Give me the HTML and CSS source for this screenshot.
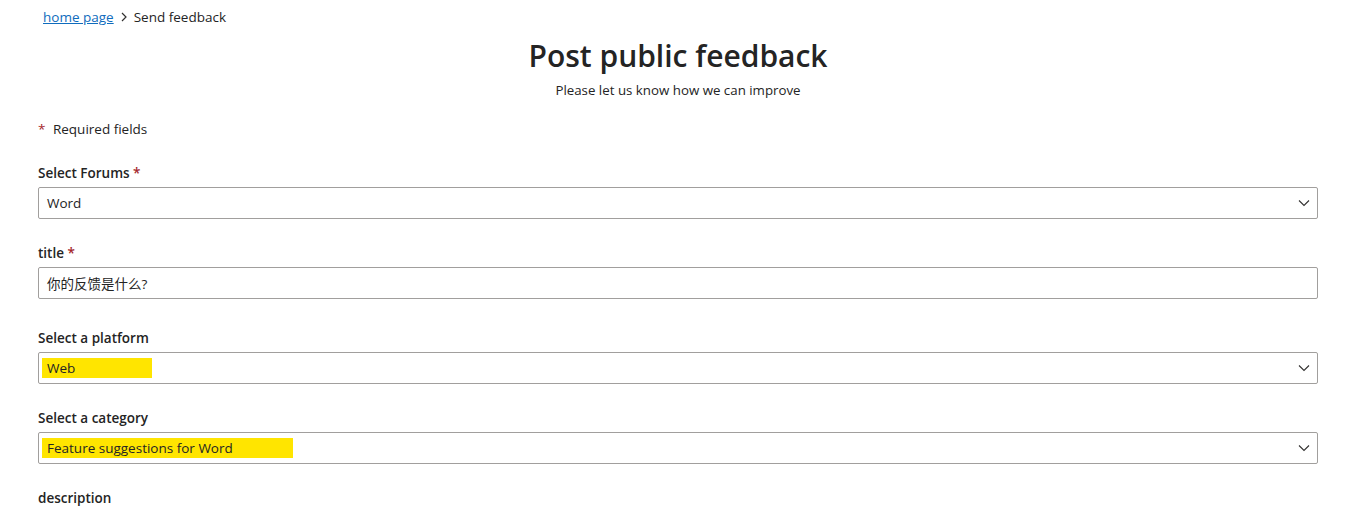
FILE: index.html
```html
<!DOCTYPE html>
<html lang="en">
<head>
<meta charset="UTF-8" />
<title>Post public feedback</title>
<link rel="stylesheet" href="styles.css">
</head>
<body>

<div class="page">
  <nav class="breadcrumb">
    <a href="#">home page</a>
    <svg class="crumb-sep" width="8" height="10" viewBox="0 0 8 10"><path d="M2 1l4 4-4 4" fill="none" stroke="#323130" stroke-width="1.2"/></svg>
    <span>Send feedback</span>
  </nav>

  <header class="intro">
    <h1>Post public feedback</h1>
    <p>Please let us know how we can improve</p>
  </header>

  <p class="required-note"><span class="star">*</span> Required fields</p>

  <div class="field">
    <label>Select Forums <span class="star">*</span></label>
    <div class="select">
      <span class="value">Word</span>
      <svg class="chevron" width="12" height="8" viewBox="0 0 12 8"><path d="M1 1.5l5 5 5-5" fill="none" stroke="#323130" stroke-width="1.1"/></svg>
    </div>
  </div>

  <div class="field">
    <label>title <span class="star">*</span></label>
    <div class="input">你的反馈是什么?</div>
  </div>

  <div class="field gap-top">
    <label>Select a platform</label>
    <div class="select">
      <span class="value mark mark-platform">Web</span>
      <svg class="chevron" width="12" height="8" viewBox="0 0 12 8"><path d="M1 1.5l5 5 5-5" fill="none" stroke="#323130" stroke-width="1.1"/></svg>
    </div>
  </div>

  <div class="field">
    <label>Select a category</label>
    <div class="select">
      <span class="value mark mark-category">Feature suggestions for Word</span>
      <svg class="chevron" width="12" height="8" viewBox="0 0 12 8"><path d="M1 1.5l5 5 5-5" fill="none" stroke="#323130" stroke-width="1.1"/></svg>
    </div>
  </div>

  <div class="field">
    <label>description</label>
  </div>
</div>

</body>
</html>
```

FILE: styles.css
```css
* {
  box-sizing: border-box;
}
body {
  margin: 0;
  font-family: "Open Sans", "Noto Sans CJK SC", sans-serif;
  font-size: 14px;
  color: #242424;
  background: #fff;
}
.page {
  width: 1280px;
  margin-left: 38px;
}
.breadcrumb {
  display: flex;
  align-items: center;
  gap: 6px;
  height: 34px;
  padding-left: 5px;
  font-size: 13.5px;
}
.breadcrumb a {
  color: #0f6cbd;
  text-decoration: underline;
}
.intro {
  text-align: center;
}
.intro h1 {
  margin: 0;
  font-size: 30px;
  font-weight: 600;
  line-height: 44px;
  color: #242424;
}
.intro p {
  margin: 2px 0 0;
  font-size: 13.3px;
  line-height: 20px;
}
.required-note {
  margin: 19px 0 0;
  font-size: 13.5px;
  line-height: 20px;
}
.star {
  color: #a4262c;
}
.required-note .star {
  margin-right: 4px;
}
.field {
  margin-top: 24px;
}
.field.gap-top {
  margin-top: 29px;
}
.field label {
  display: block;
  font-weight: 600;
  font-size: 13.5px;
  line-height: 20px;
  margin-bottom: 4px;
}
.select,
.input {
  display: flex;
  align-items: center;
  height: 32px;
  border: 1px solid #a19f9d;
  border-radius: 2px;
  padding: 0 7px 0 8px;
  font-size: 13.5px;
}
.select .value {
  flex: 1;
}
.mark {
  flex: none !important;
  display: inline-block;
  background: #ffe500;
  line-height: 20px;
  margin-left: -5px;
  padding-left: 5px;
}
.mark-platform {
  width: 110px;
}
.mark-category {
  width: 251px;
}
.select .mark + .chevron {
  margin-left: auto;
}
.chevron {
  flex: none;
}
```
